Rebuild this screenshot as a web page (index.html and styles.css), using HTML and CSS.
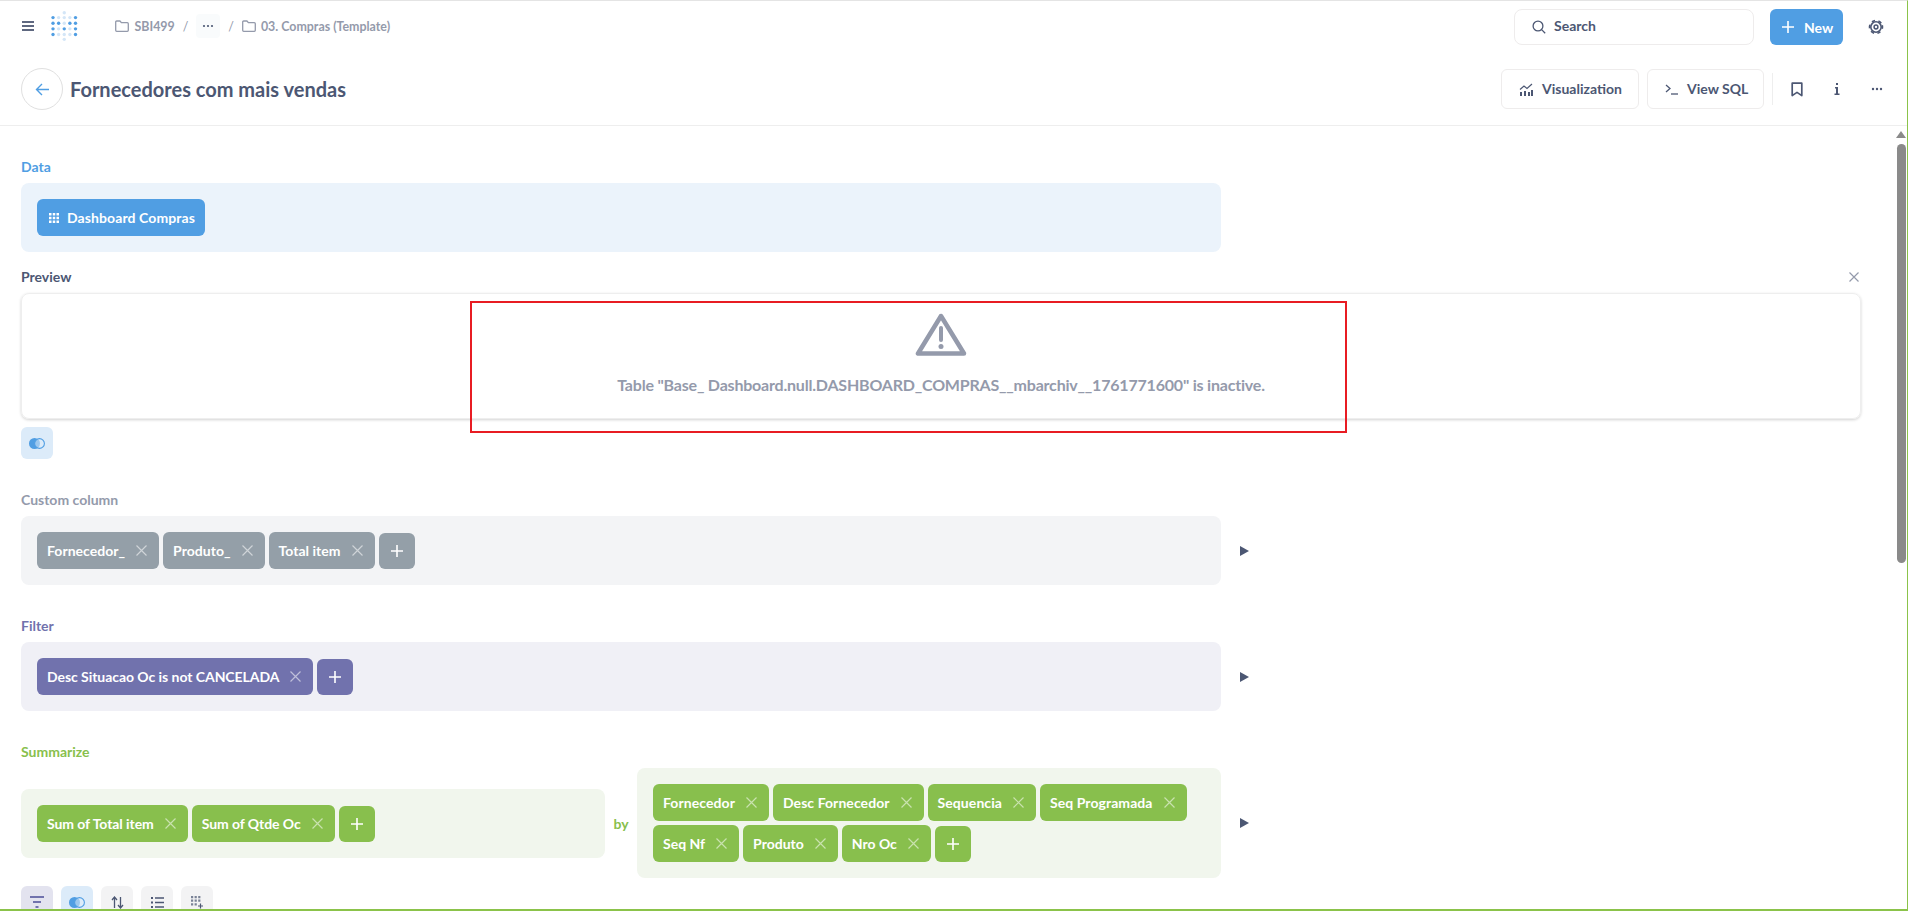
FILE: index.html
```html
<!DOCTYPE html>
<html lang="en">
<head>
<meta charset="utf-8">
<title>Fornecedores com mais vendas</title>
<link rel="stylesheet" href="styles.css">
</head>
<body>
<div class="frame">
  <header class="appbar">
    <div class="appbar-left">
      <svg class="ic-menu" width="14" height="12" viewBox="0 0 14 12"><path d="M1 2h12M1 6h12M1 10h12" stroke="#5f6880" stroke-width="2"/></svg>
      <svg class="logo" width="26.500" height="30" viewBox="0 0 28 32">
        <g fill="#509ee3">
          <circle cx="2" cy="7" r="1.800"/><circle cx="2" cy="13" r="1.800"/><circle cx="2" cy="19" r="1.800"/><circle cx="2" cy="25" r="1.800"/>
          <circle cx="8" cy="13" r="1.800"/><circle cx="14" cy="19" r="1.800"/><circle cx="20" cy="13" r="1.800"/>
          <circle cx="26" cy="7" r="1.800"/><circle cx="26" cy="13" r="1.800"/><circle cx="26" cy="19" r="1.800"/><circle cx="26" cy="25" r="1.800"/>
        </g>
        <g fill="#d4e6f7">
          <circle cx="14" cy="1.800" r="1.800"/><circle cx="8" cy="7" r="1.800"/><circle cx="14" cy="7" r="1.800"/><circle cx="20" cy="7" r="1.800"/>
          <circle cx="14" cy="13" r="1.800"/><circle cx="8" cy="19" r="1.800"/><circle cx="20" cy="19" r="1.800"/>
          <circle cx="8" cy="25" r="1.800"/><circle cx="14" cy="25" r="1.800"/><circle cx="20" cy="25" r="1.800"/><circle cx="14" cy="30.200" r="1.800"/>
        </g>
      </svg>
      <nav class="crumbs">
        <svg width="14" height="12" viewBox="0 0 14 12"><path d="M.7 2a1 1 0 0 1 1-1h3.200l1.500 1.700h5.900a1 1 0 0 1 1 1v6.600a1 1 0 0 1-1 1H1.700a1 1 0 0 1-1-1z" fill="none" stroke="#949aab" stroke-width="1.300"/></svg>
        <span class="crumb">SBI499</span>
        <span class="crumb-sep">/</span>
        <span class="crumb-more"><svg width="12" height="4" viewBox="0 0 12 4"><g fill="#4c5773"><circle cx="2" cy="2" r="1.100"/><circle cx="6" cy="2" r="1.100"/><circle cx="10" cy="2" r="1.100"/></g></svg></span>
        <span class="crumb-sep crumb-sep-b">/</span>
        <svg width="14" height="12" viewBox="0 0 14 12"><path d="M.7 2a1 1 0 0 1 1-1h3.200l1.500 1.700h5.900a1 1 0 0 1 1 1v6.600a1 1 0 0 1-1 1H1.700a1 1 0 0 1-1-1z" fill="none" stroke="#949aab" stroke-width="1.300"/></svg>
        <span class="crumb crumb-b">03. Compras (Template)</span>
      </nav>
    </div>
    <div class="appbar-right">
      <div class="search">
        <svg width="14" height="14" viewBox="0 0 14 14"><circle cx="6" cy="6" r="4.900" fill="none" stroke="#4c5773" stroke-width="1.300"/><path d="M9.600 9.600 13.200 13.200" stroke="#4c5773" stroke-width="1.300"/></svg>
        <span>Search</span>
      </div>
      <button class="new-btn"><svg width="12" height="12" viewBox="0 0 12 12"><path d="M6 0v12M0 6h12" stroke="#fff" stroke-width="1.600"/></svg><span>New</span></button>
      <svg class="gear" width="16" height="16" viewBox="0 0 16 16"><circle cx="8" cy="8" r="5.200" fill="none" stroke="#4c5773" stroke-width="1.600"/><circle cx="8" cy="8" r="6.500" fill="none" stroke="#4c5773" stroke-width="1.600" stroke-dasharray="3.400 3.400" transform="rotate(-15 8 8)"/><circle cx="8" cy="8" r="1.900" fill="none" stroke="#4c5773" stroke-width="1.500"/></svg>
    </div>
  </header>

  <div class="titlebar">
    <div class="title-left">
      <button class="back"><svg width="15" height="13" viewBox="0 0 15 13"><path d="M14 6.500H1.500M7 1 1.500 6.500 7 12" fill="none" stroke="#509ee3" stroke-width="1.400"/></svg></button>
      <h1>Fornecedores com mais vendas</h1>
    </div>
    <div class="title-right">
      <button class="tool-btn viz"><svg width="14" height="13" viewBox="0 0 14 13"><path d="M1 6.500 5 3l3 2.500L13 1" fill="none" stroke="#4c5773" stroke-width="1.200"/><path d="M1 9h2v4H1zM5 8h2v5H5zM9 9h2v4H9zM12 7h2v6h-2z" fill="#4c5773"/></svg><span>Visualization</span></button>
      <button class="tool-btn sql"><svg width="13" height="11" viewBox="0 0 13 11"><path d="M1 1l4 3.500L1 8" fill="none" stroke="#4c5773" stroke-width="1.300"/><path d="M6 10h7" stroke="#4c5773" stroke-width="1.300"/></svg><span>View SQL</span></button>
      <span class="vdiv"></span>
      <svg class="ic-book" width="12" height="15" viewBox="0 0 12 15"><path d="M1.200 1.200h9.600v12.400L6 10.400l-4.800 3.200z" fill="none" stroke="#4c5773" stroke-width="1.700" stroke-linejoin="round"/></svg>
      <svg class="ic-info" width="6" height="12" viewBox="0 0 6 12"><path d="M2 0h2v2H2zM1 4h3v6.500h1.500V12H.5v-1.500H2V5.500H1z" fill="#4c5773"/></svg>
      <svg class="ic-dots" width="12" height="4" viewBox="0 0 12 4"><g fill="#4c5773"><circle cx="2" cy="2" r="1.200"/><circle cx="6" cy="2" r="1.200"/><circle cx="10" cy="2" r="1.200"/></g></svg>
    </div>
  </div>

  <div class="body-row">
    <main class="notebook">
      <section class="step step-data">
        <h2 class="lbl lbl-blue">Data</h2>
        <div class="panel panel-blue">
          <span class="chip chip-blue">
            <svg class="ic-grid" width="10" height="10" viewBox="0 0 10 10"><path d="M0 0h2.500v2.500H0zM3.750 0h2.500v2.500h-2.500zM7.500 0H10v2.500H7.500zM0 3.750h2.500v2.500H0zM3.750 3.750h2.500v2.500h-2.500zM7.500 3.750H10v2.500H7.500zM0 7.500h2.500V10H0zM3.750 7.500h2.500V10h-2.500zM7.500 7.500H10V10H7.500z" fill="#fff"/></svg>Dashboard Compras
          </span>
        </div>
      </section>

      <section class="step-preview">
        <div class="preview-head">
          <h2 class="lbl lbl-dark">Preview</h2>
          <svg width="10" height="10" viewBox="0 0 10 10"><path d="M.5.500l9 9M9.500.500l-9 9" stroke="#949aab" stroke-width="1.200"/></svg>
        </div>
        <div class="preview-box">
          <svg width="52" height="44" viewBox="0 0 52 44"><path d="M26 3 3 40.500h46z" fill="none" stroke="#949aab" stroke-width="4.500" stroke-linejoin="round"/><path d="M26 15v12" stroke="#949aab" stroke-width="4" stroke-linecap="round"/><circle cx="26" cy="33.500" r="2.500" fill="#949aab"/></svg>
          <p>Table "Base_ Dashboard.null.DASHBOARD_COMPRAS__mbarchiv__1761771600" is inactive.</p>
        </div>
        <div class="actions actions-one">
          <span class="act act-join"><svg width="16" height="11" viewBox="0 0 16 11"><circle cx="5.500" cy="5.500" r="5.500" fill="#509ee3"/><circle cx="10.500" cy="5.500" r="4.900" fill="#dcebf9" fill-opacity=".55" stroke="#509ee3" stroke-width="1.100"/></svg></span>
        </div>
      </section>

      <section class="step step-custom">
        <h2 class="lbl lbl-gray">Custom column</h2>
        <div class="with-arrow">
          <div class="panel panel-gray">
            <span class="chip chip-gray">Fornecedor_<svg class="x" width="11" height="11" viewBox="0 0 11 11"><path d="M.5.500l10 10M10.500.500l-10 10"/></svg></span>
            <span class="chip chip-gray">Produto_<svg class="x" width="11" height="11" viewBox="0 0 11 11"><path d="M.5.500l10 10M10.500.500l-10 10"/></svg></span>
            <span class="chip chip-gray">Total item<svg class="x" width="11" height="11" viewBox="0 0 11 11"><path d="M.5.500l10 10M10.500.500l-10 10"/></svg></span>
            <span class="plus chip-gray"><svg width="12" height="12" viewBox="0 0 12 12"><path d="M6 0v12M0 6h12" stroke="#fff" stroke-width="1.600"/></svg></span>
          </div>
          <svg class="arrow" width="9" height="10" viewBox="0 0 9 10"><path d="M0 0l9 5-9 5z" fill="#4c5773"/></svg>
        </div>
      </section>

      <section class="step step-filter">
        <h2 class="lbl lbl-purple">Filter</h2>
        <div class="with-arrow">
          <div class="panel panel-purple">
            <span class="chip chip-purple">Desc Situacao Oc is not CANCELADA<svg class="x" width="11" height="11" viewBox="0 0 11 11"><path d="M.5.500l10 10M10.500.500l-10 10"/></svg></span>
            <span class="plus chip-purple"><svg width="12" height="12" viewBox="0 0 12 12"><path d="M6 0v12M0 6h12" stroke="#fff" stroke-width="1.600"/></svg></span>
          </div>
          <svg class="arrow" width="9" height="10" viewBox="0 0 9 10"><path d="M0 0l9 5-9 5z" fill="#4c5773"/></svg>
        </div>
      </section>

      <section class="step step-sum">
        <h2 class="lbl lbl-green">Summarize</h2>
        <div class="with-arrow">
          <div class="sum-row">
            <div class="panel panel-green panel-agg">
              <span class="chip chip-green">Sum of Total item<svg class="x" width="11" height="11" viewBox="0 0 11 11"><path d="M.5.500l10 10M10.500.500l-10 10"/></svg></span>
              <span class="chip chip-green">Sum of Qtde Oc<svg class="x" width="11" height="11" viewBox="0 0 11 11"><path d="M.5.500l10 10M10.500.500l-10 10"/></svg></span>
              <span class="plus chip-green"><svg width="12" height="12" viewBox="0 0 12 12"><path d="M6 0v12M0 6h12" stroke="#fff" stroke-width="1.600"/></svg></span>
            </div>
            <span class="by">by</span>
            <div class="panel panel-green panel-by">
              <span class="chip chip-green">Fornecedor<svg class="x" width="11" height="11" viewBox="0 0 11 11"><path d="M.5.500l10 10M10.500.500l-10 10"/></svg></span>
              <span class="chip chip-green">Desc Fornecedor<svg class="x" width="11" height="11" viewBox="0 0 11 11"><path d="M.5.500l10 10M10.500.500l-10 10"/></svg></span>
              <span class="chip chip-green">Sequencia<svg class="x" width="11" height="11" viewBox="0 0 11 11"><path d="M.5.500l10 10M10.500.500l-10 10"/></svg></span>
              <span class="chip chip-green">Seq Programada<svg class="x" width="11" height="11" viewBox="0 0 11 11"><path d="M.5.500l10 10M10.500.500l-10 10"/></svg></span>
              <span class="chip chip-green">Seq Nf<svg class="x" width="11" height="11" viewBox="0 0 11 11"><path d="M.5.500l10 10M10.500.500l-10 10"/></svg></span>
              <span class="chip chip-green">Produto<svg class="x" width="11" height="11" viewBox="0 0 11 11"><path d="M.5.500l10 10M10.500.500l-10 10"/></svg></span>
              <span class="chip chip-green">Nro Oc<svg class="x" width="11" height="11" viewBox="0 0 11 11"><path d="M.5.500l10 10M10.500.500l-10 10"/></svg></span>
              <span class="plus chip-green"><svg width="12" height="12" viewBox="0 0 12 12"><path d="M6 0v12M0 6h12" stroke="#fff" stroke-width="1.600"/></svg></span>
            </div>
          </div>
          <svg class="arrow" width="9" height="10" viewBox="0 0 9 10"><path d="M0 0l9 5-9 5z" fill="#4c5773"/></svg>
        </div>
      </section>

      <div class="actions actions-row">
        <span class="act act-filter"><svg width="14" height="12" viewBox="0 0 14 12"><path d="M0 1h14M3 6h8M5.500 11h3" stroke="#7172ad" stroke-width="2"/></svg></span>
        <span class="act act-join"><svg width="16" height="11" viewBox="0 0 16 11"><circle cx="5.500" cy="5.500" r="5.500" fill="#509ee3"/><circle cx="10.500" cy="5.500" r="4.900" fill="#dcebf9" fill-opacity=".55" stroke="#509ee3" stroke-width="1.100"/></svg></span>
        <span class="act act-plain"><svg width="13" height="13" viewBox="0 0 13 13"><path d="M3.500 12V1.500M1 4l2.500-3L6 4M9.500 1v10.500M7 9l2.500 3L12 9" fill="none" stroke="#4c5773" stroke-width="1.300"/></svg></span>
        <span class="act act-plain"><svg width="13" height="11" viewBox="0 0 13 11"><path d="M0 0h2v2H0zM0 4.500h2v2H0zM0 9h2v2H0zM4 .3h9v1.400H4zM4 4.800h9v1.400H4zM4 9.300h9v1.400H4z" fill="#4c5773"/></svg></span>
        <span class="act act-plain"><svg width="13" height="13" viewBox="0 0 13 13"><path d="M0 0h2.200v2.200H0zM3.600 0h2.200v2.200H3.600zM7.200 0h2.200v2.200H7.200zM0 3.600h2.200v2.200H0zM3.600 3.600h2.200v2.200H3.600zM7.200 3.600h2.200v2.200H7.200zM0 7.200h2.200v2.200H0zM3.600 7.200h2.200v2.200H3.600z" fill="#7a8296"/><path d="M9.500 7.500v5M7 10h5" stroke="#4c5773" stroke-width="1.200"/></svg></span>
      </div>

      <div class="redbox" aria-hidden="true"></div>
    </main>
    <aside class="scrollbar">
      <span class="sb-up"></span>
      <span class="sb-thumb"></span>
    </aside>
  </div>
</div>
</body>
</html>
```
FILE: styles.css
```css
* { box-sizing: border-box; }
html, body { margin: 0; height: 100%; overflow: hidden; }
body { font-family: Lato, "Open Sans", sans-serif; color: #4c5773; background: #fff; }
button { font-family: inherit; }
svg { display: block; flex: none; }

.frame {
  width: 1908px; height: 911px; display: flex; flex-direction: column;
  border-top: 1px solid #e4e4e4; border-right: 1px solid #8bc34a; border-bottom: 2px solid #8bc34a;
  overflow: hidden;
}

.appbar { height: 52px; flex: none; display: flex; justify-content: space-between; align-items: center; padding: 0 23px 2px 21px; }
.appbar-left, .appbar-right { display: flex; align-items: center; }
.appbar-right { margin-top: 2px; }
.ic-menu { margin-right: 16px; }
.logo { margin-right: 37px; }
.crumbs { display: flex; align-items: center; font-size: 12.4px; font-weight: 700; color: #949aab; }
.crumb { margin-left: 6px; }
.crumb-b { margin-left: 5px; }
.crumb-sep { margin: 0 8px; font-weight: 400; }
.crumb-more { width: 24px; height: 24px; background: #f9fbfc; border-radius: 4px; display: flex; align-items: center; justify-content: center; }
.crumb-sep-b { margin: 0 8px; }

.search { width: 240px; height: 36px; border: 1px solid #eeecec; border-radius: 8px; display: flex; align-items: center; padding-left: 17px; gap: 8px; font-size: 14px; font-weight: 700; color: #4c5773; }
.search span { padding-bottom: 3px; }
.new-btn { width: 73px; height: 36px; margin-left: 16px; background: #509ee3; border: 0; border-radius: 6px; color: #fff; font-size: 14px; font-weight: 700; display: flex; align-items: center; padding: 0 0 0 12px; gap: 10px; }
.gear { margin-left: 25px; }

.titlebar { height: 73px; flex: none; border-bottom: 1px solid #eeeeee; display: flex; justify-content: space-between; align-items: center; padding: 0 23px 0 21px; }
.title-left, .title-right { display: flex; align-items: center; }
.back { width: 42px; height: 42px; border-radius: 50%; border: 1px solid #e0e0e0; background: #fff; display: flex; align-items: center; justify-content: center; padding: 0; margin-right: 7px; }
h1 { margin: 0; font-size: 20px; font-weight: 700; color: #4c5773; }
.tool-btn { height: 40px; background: #fff; border: 1px solid #eeecec; border-radius: 6px; color: #4c5773; font-size: 14px; font-weight: 700; display: flex; align-items: center; padding: 0; }
.tool-btn span { padding-bottom: 2px; }
.viz { width: 138px; padding-left: 17px; gap: 9px; margin-right: 8px; }
.sql { width: 117px; padding-left: 17px; gap: 9px; margin-right: 8px; }
.vdiv { width: 1px; height: 32px; background: #eeeeee; }
.ic-book { margin-left: 18px; }
.ic-info { margin-left: 31px; }
.ic-dots { margin-left: 31px; margin-right: 1px; }

.body-row { flex: 1; min-height: 0; display: flex; }
.notebook { flex: 1; min-width: 0; position: relative; padding: 0 0 0 21px; overflow: hidden; }
.scrollbar { width: 18px; flex: none; display: flex; flex-direction: column; align-items: flex-end; padding: 5px 1px 0 0; }
.sb-up { width: 0; height: 0; border-left: 5px solid transparent; border-right: 5px solid transparent; border-bottom: 7px solid #8a8a8a; }
.sb-thumb { width: 9px; height: 419px; margin-top: 6px; background: #8a8a8a; border-radius: 5px; }

.lbl { margin: 0; font-size: 14px; font-weight: 700; line-height: 18px; }
.lbl-blue { color: #509ee3; }
.lbl-dark { color: #4c5773; }
.lbl-gray { color: #949aab; }
.lbl-purple { color: #7172ad; }
.lbl-green { color: #88bf4d; }

.step-data { padding-top: 32px; }
.step-data .lbl, .step-custom .lbl, .step-filter .lbl, .step-sum .lbl { margin-bottom: 7px; }
.panel { border-radius: 8px; display: flex; flex-wrap: wrap; gap: 4px; padding: 16px; width: 1200px; }
.panel-blue { background: #ebf3fb; }
.panel-gray { background: #f3f4f6; }
.panel-purple { background: #f0f0f6; }
.panel-green { background: #f1f6ed; }

.chip { height: 37px; border-radius: 6px; color: #fff; font-size: 14px; font-weight: 700; display: inline-flex; align-items: center; padding: 0 12px 0 10px; }
.chip-blue { background: #509ee3; padding: 0 10px 0 12px; letter-spacing: .1px; }
.chip-gray { background: #949fa8; letter-spacing: .03px; }
.chip-purple { background: #7172ad; letter-spacing: -.05px; }
.chip-green { background: #88bf4d; }
.panel-agg .chip { letter-spacing: -.07px; }
.panel-by .chip:nth-child(-n+4) { letter-spacing: .07px; }
.ic-grid { margin-right: 8px; }
.x { margin-left: 11px; fill: none; stroke: rgba(255,255,255,.55); stroke-width: 1.2; }
.plus { width: 36px; height: 36px; border-radius: 6px; display: inline-flex; align-items: center; justify-content: center; align-self: flex-end; }

.step-preview { padding-top: 16px; }
.preview-head { display: flex; justify-content: space-between; align-items: center; width: 1840px; padding-right: 2px; margin-bottom: 7px; }
.preview-box { width: 1840px; height: 126px; border: 1px solid #eeeeee; border-radius: 8px; box-shadow: 0 1px 3px rgba(0,0,0,.18); display: flex; flex-direction: column; align-items: center; padding-top: 19px; }
.preview-box p { margin: 18px 0 0; font-size: 16px; font-weight: 700; color: #949aab; line-height: 20px; letter-spacing: -.2px; }
.actions { display: flex; gap: 8px; }
.actions-one { margin-top: 8px; }
.act { width: 32px; height: 32px; border-radius: 6px; display: flex; align-items: center; justify-content: center; }
.act-join { background: #dcebf9; }
.act-filter { background: #e3e3ef; }
.act-plain { background: #f3f3f4; }

.step-custom { padding-top: 32px; }
.step-filter { padding-top: 32px; }
.step-sum { padding-top: 32px; }
.with-arrow { display: flex; align-items: center; }
.arrow { margin-left: 19px; }
.sum-row { display: flex; align-items: center; width: 1200px; }
.panel-agg { width: 584px; }
.by { width: 32px; font-size: 14px; font-weight: 700; color: #88bf4d; text-align: center; }
.panel-by { width: 584px; }
.actions-row { margin-top: 8px; }

.redbox { position: absolute; left: 470px; top: 175px; width: 877px; height: 132px; border: 2px solid #e81c23; }
```
